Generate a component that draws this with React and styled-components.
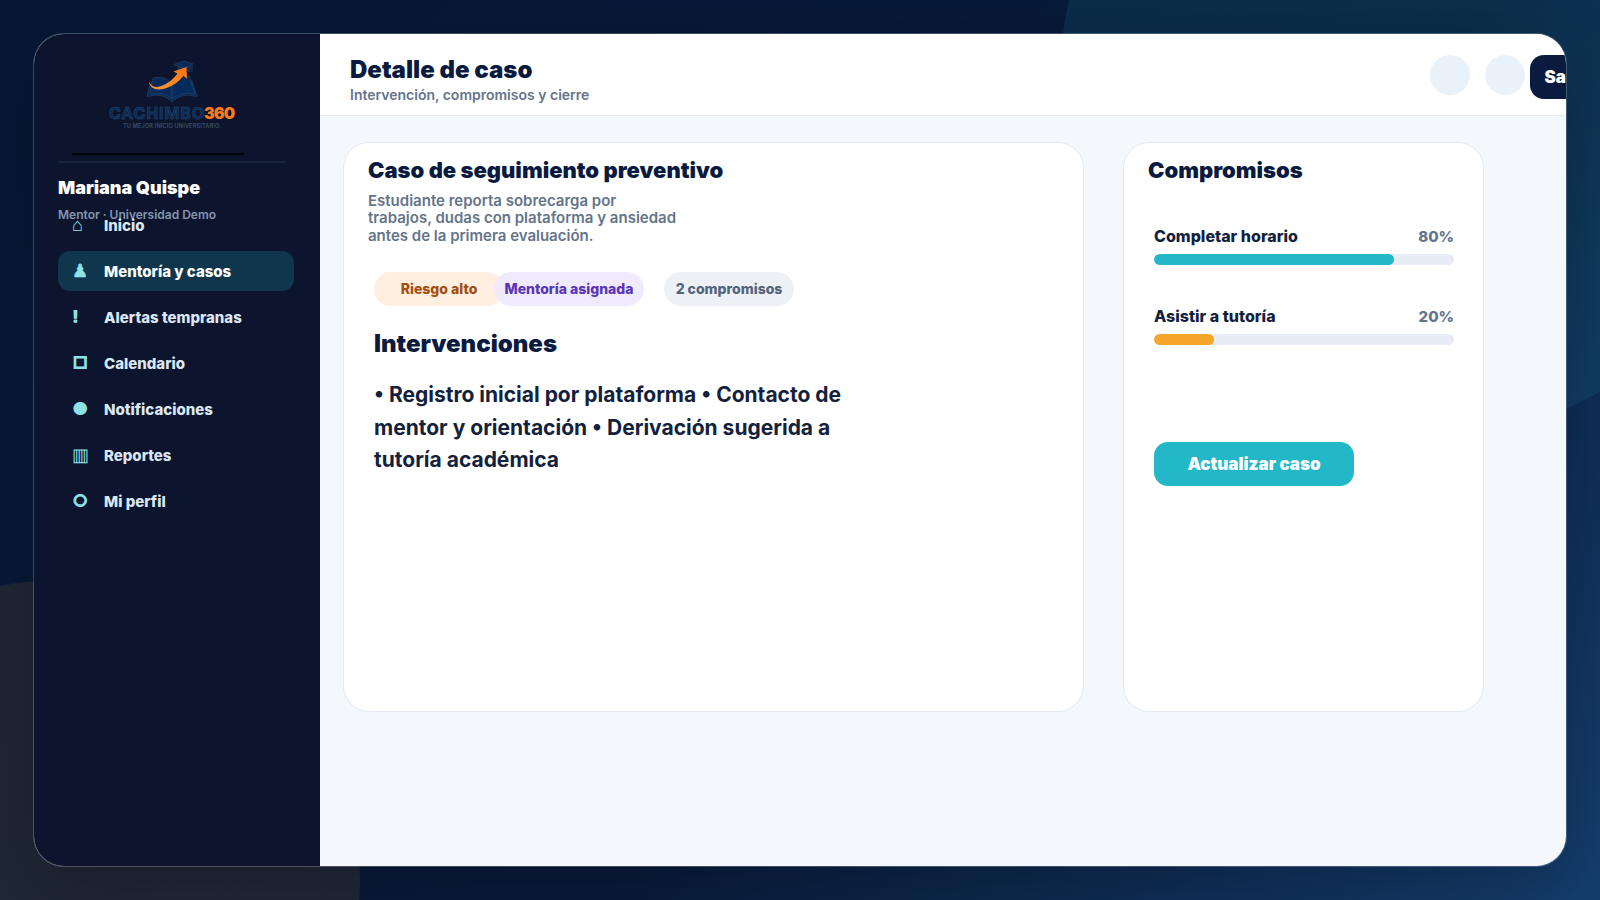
import styled, { createGlobalStyle, css } from 'styled-components'

const GlobalStyle = createGlobalStyle`
  * {
    box-sizing: border-box;
  }
  body {
    margin: 0;
    overflow: hidden;
    font-family: Inter, "Liberation Sans", sans-serif;
    color: #14213d;
  }
  h1, h2, h3, p {
    margin: 0;
  }
`

const Page = styled.div`
  position: relative;
  width: 1600px;
  height: 900px;
  padding: 33px;
  overflow: hidden;
  background: linear-gradient(135deg, #061735 0%, #091c3c 60%, #153f70 100%);
`

const Glow = styled.div`
  position: absolute;
  border-radius: 50%;
  ${({ $tone }) => $tone === 'teal' ? css`
    width: 720px;
    height: 720px;
    left: 1060px;
    top: -280px;
    background: rgba(34, 184, 200, 0.12);
  ` : css`
    width: 600px;
    height: 600px;
    left: -240px;
    top: 580px;
    background: rgba(245, 165, 42, 0.1);
  `}
`

const Window = styled.div`
  position: relative;
  display: flex;
  width: 1534px;
  height: 834px;
  border: 1px solid rgba(255, 255, 255, 0.22);
  border-radius: 31px;
  overflow: hidden;
  background: #f4f7fc;
  background-clip: padding-box;
  box-shadow: 0 28px 80px rgba(0, 0, 0, 0.24);
`

const Sidebar = styled.aside`
  flex: none;
  width: 286px;
  padding: 20px 26px 0 24px;
  background: #0d152e;
`

const Brand = styled.div`
  height: 109px;
  margin-right: 8px;
  border-bottom: 2px solid #18233c;
`

const BrandLogo = styled.svg`
  display: block;
  width: 172px;
  height: 102px;
  margin-left: 14px;
`

const User = styled.div`
  height: 42px;
  padding-top: 14px;
  white-space: nowrap;
`

const UserName = styled.h3`
  font-size: 18px;
  line-height: 22px;
  font-weight: 900;
  color: #fff;
`

const UserRole = styled.p`
  margin-top: 8px;
  font-size: 12px;
  line-height: 15px;
  font-weight: 600;
  color: #8496b0;
`

const Nav = styled.nav`
  display: flex;
  flex-direction: column;
  gap: 6px;
`

const NavItem = styled.a`
  display: flex;
  align-items: center;
  width: 236px;
  height: 40px;
  padding-left: 14px;
  border-radius: 12px;
  font-size: 15px;
  font-weight: 800;
  color: ${({ $active }) => ($active ? '#fff' : '#dbe7f5')};
  background: ${({ $active }) => ($active ? '#0f364c' : 'transparent')};
`

const NavIcon = styled.span`
  width: 32px;
  font-size: 18px;
  line-height: 22px;
  font-weight: ${({ $thin }) => ($thin ? 400 : 900)};
  color: #8be3e8;
`

const Main = styled.main`
  flex: 1;
  min-width: 0;
`

const Topbar = styled.header`
  display: flex;
  height: 82px;
  padding: 21px 0 0 30px;
  background: #fff;
  border-bottom: 1px solid #e5ebf3;
`

const Heading = styled.div`
  width: 1080px;
  flex: none;
`

const PageTitle = styled.h1`
  font-size: 24px;
  line-height: 29px;
  font-weight: 900;
  color: #0b1b3f;
`

const PageSubtitle = styled.p`
  margin-top: 2px;
  font-size: 14px;
  line-height: 17px;
  font-weight: 600;
  color: #64748b;
`

const RoundButton = styled.button`
  flex: none;
  width: 40px;
  height: 40px;
  margin-right: ${({ $gap }) => $gap}px;
  border: 0;
  border-radius: 50%;
  background: #e8f2f8;
`

const Button = styled.button`
  flex: none;
  width: ${({ $width }) => $width}px;
  height: 44px;
  padding: 0;
  border: 0;
  border-radius: 14px;
  font: 900 17px Inter, "Liberation Sans", sans-serif;
  color: #fff;
  background: ${({ $dark }) => ($dark ? '#0b1b3f' : '#22b8c8')};
`

const Content = styled.div`
  display: flex;
  gap: 39px;
  padding: 26px 0 0 23px;
`

const Card = styled.section`
  width: ${({ $width }) => $width}px;
  height: 570px;
  flex: none;
  padding: 12px 23px 12px 24px;
  border: 1px solid #e2e9f2;
  border-radius: 26px;
  background: #fff;
`

const CardTitle = styled.h2`
  font-size: 22px;
  line-height: 30px;
  font-weight: 900;
  color: #0b1b3f;
`

const CardText = styled.p`
  width: 315px;
  margin-top: 7px;
  font-size: 15px;
  line-height: 17.25px;
  font-weight: 600;
  color: #64748b;
`

const CardBody = styled.div`
  padding: 0 6px;
`

const Badges = styled.div`
  display: flex;
  margin-top: 28px;
`

const badgeTones = {
  orange: css`
    color: #a44e10;
    background: #ffefe0;
  `,
  purple: css`
    color: #5b35b8;
    background: #f0eaff;
  `,
  gray: css`
    color: #52657c;
    background: #edf1f6;
  `,
}

const Badge = styled.span`
  width: ${({ $width }) => $width}px;
  height: 34px;
  margin-left: ${({ $offset }) => $offset}px;
  border-radius: 17px;
  font-size: 14px;
  line-height: 34px;
  font-weight: 800;
  text-align: center;
  white-space: nowrap;
  ${({ $tone }) => badgeTones[$tone]}
`

const SectionTitle = styled.h2`
  margin-top: 23px;
  font-size: 24px;
  line-height: 29px;
  font-weight: 900;
  color: #0b1b3f;
`

const Interventions = styled.p`
  width: 480px;
  margin-top: 21.5px;
  font-size: 21px;
  line-height: 32.55px;
  font-weight: 700;
  color: #14213d;
`

const Commitment = styled.div`
  height: 80px;
`

const CommitmentHead = styled.div`
  display: flex;
  justify-content: space-between;
  align-items: baseline;
  font-size: 16px;
  line-height: 20px;
  font-weight: 800;
`

const Percent = styled.span`
  font-size: 15px;
  color: #64748b;
`

const Track = styled.div`
  height: 11px;
  margin-top: 8px;
  border-radius: 6px;
  overflow: hidden;
  background: #e8edf5;
`

const Bar = styled.div`
  height: 100%;
  border-radius: 6px;
  background: ${({ $color }) => $color};
`

const CommitmentList = styled.div`
  height: 216px;
  margin-top: 41px;

  ${CommitmentHead} {
    height: 20px;
  }
`

const navItems = [
  { icon: '⌂', label: 'Inicio' },
  { icon: '♟', label: 'Mentoría y casos', active: true },
  { icon: '!', label: 'Alertas tempranas' },
  { icon: '□', label: 'Calendario' },
  { icon: '●', label: 'Notificaciones' },
  { icon: '▥', label: 'Reportes', thin: true },
  { icon: '○', label: 'Mi perfil' },
]

const badges = [
  { label: 'Riesgo alto', tone: 'orange', width: 130, offset: 0 },
  { label: 'Mentoría asignada', tone: 'purple', width: 150, offset: -10 },
  { label: '2 compromisos', tone: 'gray', width: 130, offset: 20 },
]

const commitments = [
  { label: 'Completar horario', value: 80, color: '#22b8c8' },
  { label: 'Asistir a tutoría', value: 20, color: '#f5a52a' },
]

const Logo = () => (
  <BrandLogo viewBox="72 54 172 102">
    <defs>
      <linearGradient id="arrow" x1="0" y1="1" x2="1" y2="0">
        <stop offset="0" stopColor="#ff9a3c" />
        <stop offset="1" stopColor="#f97410" />
      </linearGradient>
    </defs>
    <g fill="#062a5b" stroke="#2c4a68" strokeWidth="0.6" strokeLinejoin="round">
      <path d="M150 84 L147 96.5 Q163 92 172 102 Q181 92 197 96.5 L192 81 L189 81 L172 99 L154 80 Z" />
      <path d="M153 78 Q166 75 172 85 L172 99 Q164 91 150 94 Z" />
      <path d="M189 76 Q177 76 172 85 L172 99 Q181 91 195 94 Z" />
      <path d="M178 66 L178 72 Q184 68 190 72 L190 66 L184 69 Z" />
      <path d="M174 64.5 L184 61 L193 64 L184 68.5 Z" />
      <path d="M192 64.5 L192 72" />
    </g>
    <path
      fill="url(#arrow)"
      d="M149 81.5 C149.5 88.5 157 91 165 88.5 C173 86 180 81 183.5 75.5 L187 79 L186.5 67 L173.5 71.5 L177.5 73.5 C173 79.5 167 84.5 160 86.5 C155 88 150.5 86 149 81.5 Z"
    />
    <text x="109" y="119.3" fontSize="16" fontWeight="700" textLength="95" fill="#062a5b" stroke="#2b4a69" strokeWidth="0.5">
      CACHIMBO
    </text>
    <text x="204" y="119.3" fontSize="16" fontWeight="900" textLength="31" fill="#f97a1c">
      360
    </text>
    <text x="123" y="128" fontSize="5.6" fontWeight="600" textLength="98" fill="#36506c">
      TU MEJOR INICIO UNIVERSITARIO.
    </text>
    <path d="M72 154.2 H244" stroke="#01030a" strokeWidth="2.2" />
  </BrandLogo>
)

const App = () => {
  return (
    <Page>
      <GlobalStyle />
      <Glow $tone="teal" />
      <Glow $tone="orange" />
      <Window>
        <Sidebar>
          <Brand>
            <Logo />
          </Brand>
          <User>
            <UserName>Mariana Quispe</UserName>
            <UserRole>Mentor · Universidad Demo</UserRole>
          </User>
          <Nav>
            {navItems.map((item) => (
              <NavItem key={item.label} $active={item.active}>
                <NavIcon $thin={item.thin}>{item.icon}</NavIcon>
                {item.label}
              </NavItem>
            ))}
          </Nav>
        </Sidebar>
        <Main>
          <Topbar>
            <Heading>
              <PageTitle>Detalle de caso</PageTitle>
              <PageSubtitle>Intervención, compromisos y cierre</PageSubtitle>
            </Heading>
            <RoundButton $gap={15} />
            <RoundButton $gap={5} />
            <Button $dark $width={68}>Salir</Button>
          </Topbar>
          <Content>
            <Card $width={741}>
              <CardTitle>Caso de seguimiento preventivo</CardTitle>
              <CardText>
                Estudiante reporta sobrecarga por trabajos, dudas con plataforma y ansiedad antes de la primera evaluación.
              </CardText>
              <CardBody>
                <Badges>
                  {badges.map((badge) => (
                    <Badge key={badge.label} $tone={badge.tone} $width={badge.width} $offset={badge.offset}>
                      {badge.label}
                    </Badge>
                  ))}
                </Badges>
                <SectionTitle>Intervenciones</SectionTitle>
                <Interventions>
                  • Registro inicial por plataforma • Contacto de mentor y orientación • Derivación sugerida a tutoría académica
                </Interventions>
              </CardBody>
            </Card>
            <Card $width={361}>
              <CardTitle>Compromisos</CardTitle>
              <CardBody>
                <CommitmentList>
                  {commitments.map((item) => (
                    <Commitment key={item.label}>
                      <CommitmentHead>
                        <span>{item.label}</span>
                        <Percent>{item.value}%</Percent>
                      </CommitmentHead>
                      <Track>
                        <Bar $color={item.color} style={{ width: `${item.value}%` }} />
                      </Track>
                    </Commitment>
                  ))}
                </CommitmentList>
                <Button $width={200}>Actualizar caso</Button>
              </CardBody>
            </Card>
          </Content>
        </Main>
      </Window>
    </Page>
  )
}

export default App
